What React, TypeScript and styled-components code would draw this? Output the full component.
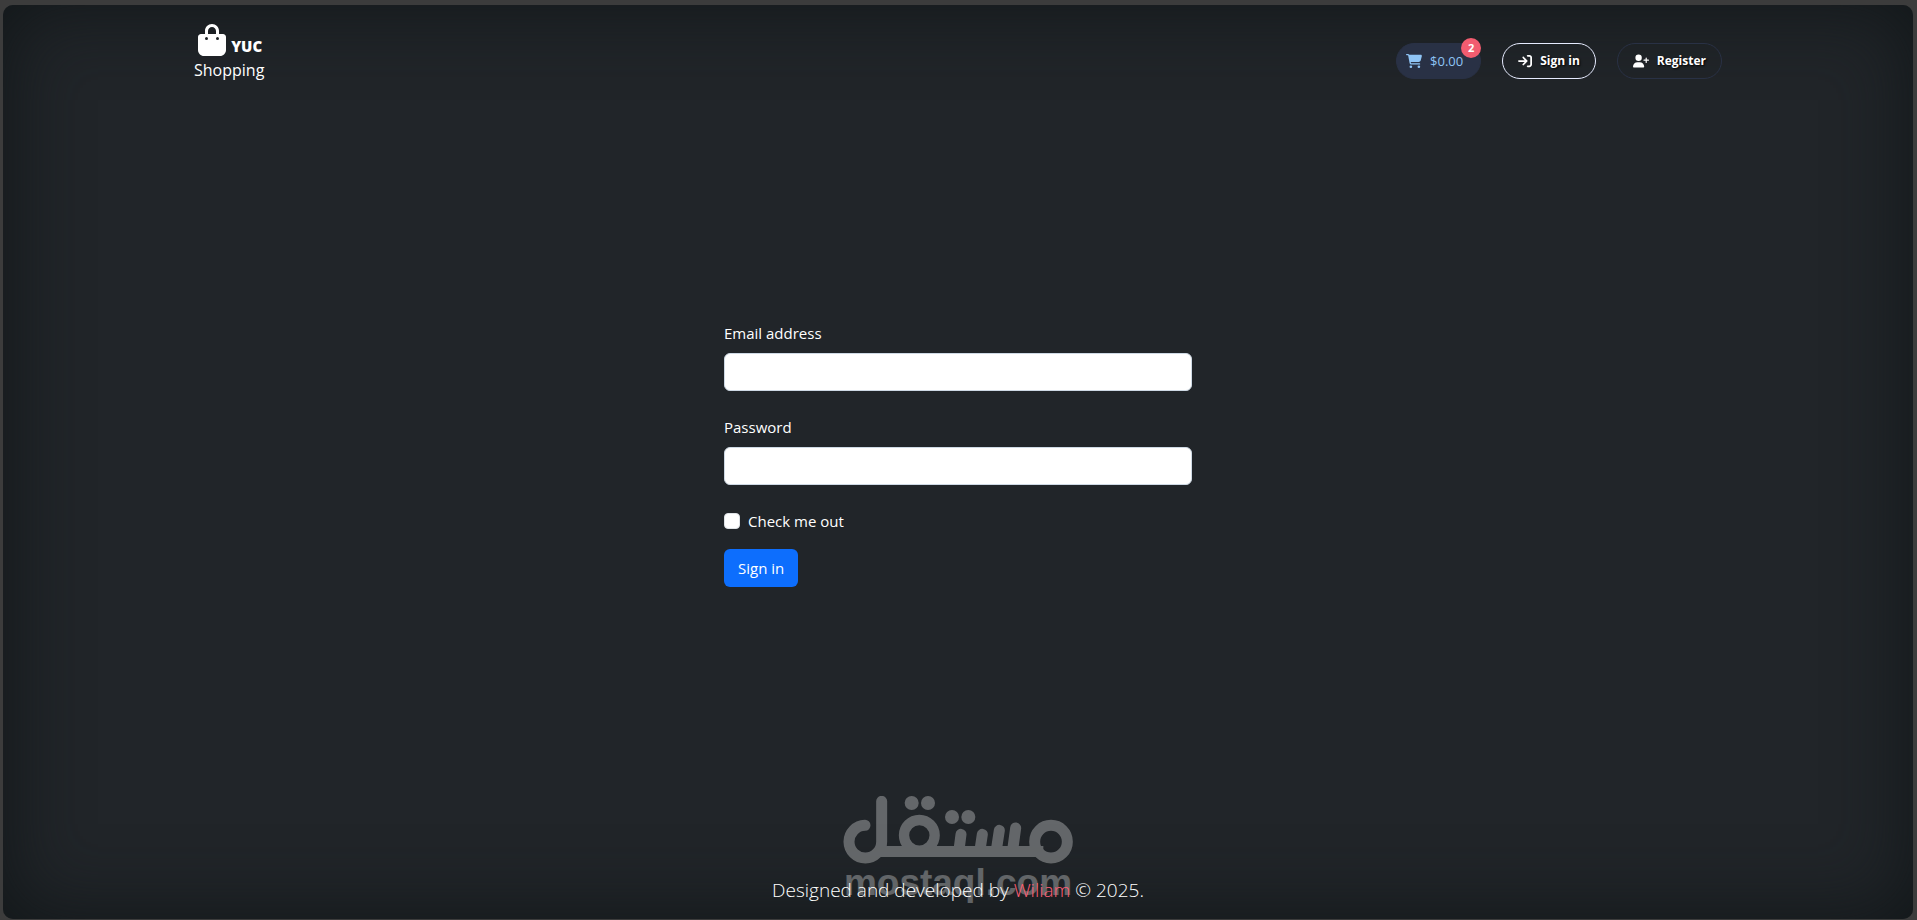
import React from "react";
import styled, { createGlobalStyle } from "styled-components";
import { FaArrowRightToBracket, FaBagShopping, FaCartShopping, FaUserPlus } from "react-icons/fa6";

const GlobalStyle = createGlobalStyle`
  *, *::before, *::after { box-sizing: border-box; }
  body {
    margin: 0;
    background: #3c3c3c;
    color: #fff;
    font: 15px/24px "Open Sans", "Noto Sans", sans-serif;
  }
  button, input { font: inherit; }
`;

const Page = styled.div`
  display: flex;
  min-height: 100vh;
  padding: 5px 4px 1px 3px;
`;

const Panel = styled.div`
  flex: 1;
  display: flex;
  flex-direction: column;
  border-radius: 10px;
  background: #212529;
  box-shadow: inset 0 0 80px #111618;
`;

const Header = styled.header`
  display: flex;
  justify-content: space-between;
  align-items: center;
  width: 80%;
  margin: 0 auto;
  padding: 16px 0;
`;

const Brand = styled.a`
  display: flex;
  flex-direction: column;
  align-items: center;
  color: #fff;
  font-size: 16px;
  text-decoration: none;
`;

const BrandTop = styled.span`
  display: flex;
  align-items: flex-end;
  gap: 3px;
  padding-top: 3px;
  font-size: 15px;
  font-weight: 700;
  margin-bottom: 2px;

  strong { line-height: 20px; }
`;

const Actions = styled.nav`
  display: flex;
  align-items: center;
  gap: 21px;
  padding-top: 18px;
`;

const Pill = styled.button<{ $edge: string; $fill?: string }>`
  position: relative;
  display: inline-flex;
  align-items: center;
  gap: 8px;
  height: 36px;
  padding: 0 15px;
  border: 1px solid ${(p) => p.$edge};
  border-radius: 18px;
  background: ${(p) => p.$fill ?? "transparent"};
  color: #fff;
  font-size: 12px;
  font-weight: 700;
  text-shadow: 1px 1px 2px #000;
  white-space: nowrap;
`;

const CartPill = styled(Pill)`
  padding: 0 17px 0 9px;
  color: #8fc4f5;
  font-size: 13px;
  font-weight: 400;
  text-shadow: none;
`;

const Badge = styled.span`
  position: absolute;
  top: -6px;
  right: -1px;
  width: 20px;
  height: 20px;
  border-radius: 50%;
  background: #f25c70;
  color: #fff;
  font-size: 11px;
  font-weight: 700;
  line-height: 20px;
  text-align: center;
`;

const Main = styled.main`
  flex: 1;
  display: flex;
  justify-content: center;
  align-items: center;
`;

const Form = styled.form`
  width: 468px;
  max-width: 90%;
  padding-bottom: 54px;
`;

const Field = styled.div`
  display: flex;
  flex-direction: column;
  gap: 8px;
  margin-bottom: 24px;
`;

const TextInput = styled.input`
  width: 100%;
  height: 38px;
  padding: 6px 12px;
  border: 1px solid #ced9e4;
  border-radius: 6px;
  background: #fff;
  color: #212529;
`;

const CheckRow = styled.div`
  display: flex;
  align-items: center;
  gap: 8px;
  margin-bottom: 16px;
`;

const Checkbox = styled.input`
  appearance: none;
  width: 16px;
  height: 16px;
  margin: 0;
  border: 1px solid #dee2e6;
  border-radius: 4px;
  background: #fff;

  &:checked { background: #0d6efd; }
`;

const Submit = styled.button`
  height: 38px;
  padding: 0 14px;
  border: 0;
  border-radius: 6px;
  background: #0d6efd;
  color: #fff;
`;

const Footer = styled.footer`
  position: relative;
  padding: 12px 0 14px;
  text-align: center;
  font-size: 19px;
  font-weight: 300;
  line-height: 30px;

  p { position: relative; margin: 0; }
  a { color: #ff5f75; text-decoration: none; }
`;

const Watermark = styled.div`
  position: absolute;
  bottom: 17px;
  left: 50%;
  width: 230px;
  margin-left: -115px;
  opacity: 0.3;
  font: 700 37px/38px "Liberation Sans", sans-serif;
  white-space: nowrap;
  pointer-events: none;

  svg { display: block; }
`;

const MostaqlMark = () => (
  <svg width="230" height="68" viewBox="249 48 690 204" fill="none" stroke="#fff" strokeWidth="33" strokeLinecap="round" aria-hidden="true">
    <path d="M315 136A49 49 0 1 0 365 185V64" />
    <path d="M348 214.500H850" strokeLinecap="butt" />
    <circle cx="478" cy="166" r="46" strokeWidth="31" />
    <circle cx="873" cy="185" r="49" />
    <path d="M603 163L597 210M667 163L660 210M718 151L709 210M767 144L758 210" />
    <g fill="#fff" stroke="none">
      <circle cx="455" cy="69" r="21" />
      <circle cx="504" cy="69" r="21" />
      <circle cx="576" cy="111" r="21" />
      <circle cx="625" cy="111" r="21" />
    </g>
  </svg>
);

export default function App() {
  return (
    <>
      <GlobalStyle />
      <Page>
        <Panel>
          <Header>
            <Brand href="#">
              <BrandTop>
                <FaBagShopping size={32} />
                <strong>YUC</strong>
              </BrandTop>
              <span>Shopping</span>
            </Brand>
            <Actions>
              <CartPill type="button" $edge="#293145" $fill="#293145">
                <FaCartShopping size={16} />
                $0.00
                <Badge>2</Badge>
              </CartPill>
              <Pill type="button" $edge="#e6ebff">
                <FaArrowRightToBracket size={14} />
                Sign in
              </Pill>
              <Pill type="button" $edge="#293145">
                <FaUserPlus size={16} />
                Register
              </Pill>
            </Actions>
          </Header>
          <Main>
            <Form onSubmit={(e) => e.preventDefault()}>
              <Field>
                <label htmlFor="email">Email address</label>
                <TextInput id="email" type="email" />
              </Field>
              <Field>
                <label htmlFor="password">Password</label>
                <TextInput id="password" type="password" />
              </Field>
              <CheckRow>
                <Checkbox id="check" type="checkbox" />
                <label htmlFor="check">Check me out</label>
              </CheckRow>
              <Submit type="submit">Sign in</Submit>
            </Form>
          </Main>
          <Footer>
            <Watermark>
              <MostaqlMark />
              mostaql.com
            </Watermark>
            <p>
              Designed and developed by <a href="#">Wiliam</a> © 2025.
            </p>
          </Footer>
        </Panel>
      </Page>
    </>
  );
}
